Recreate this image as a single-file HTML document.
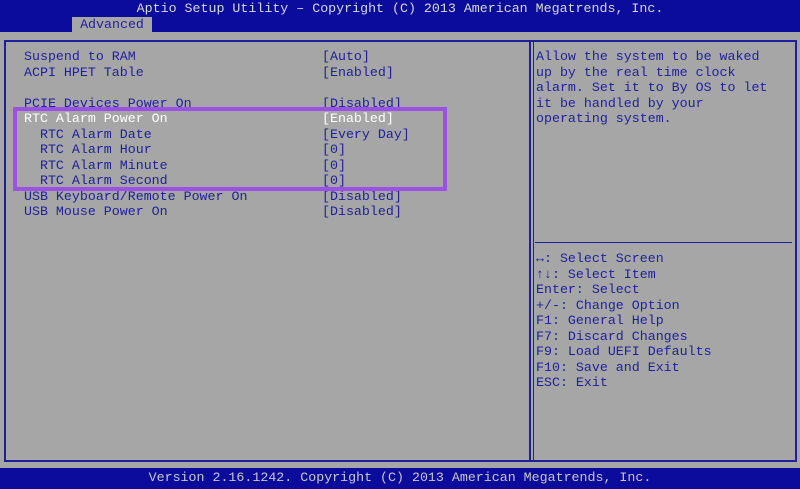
<!DOCTYPE html>
<html><head><style>
body{margin:0;width:800px;height:489px;background:#a6a6a6;position:relative;overflow:hidden;font-family:"Liberation Mono",monospace;font-size:13.3px;color:#1f1f9c}
.abs{position:absolute;white-space:pre;line-height:15.5px}
#top{position:absolute;left:0;top:0;width:800px;height:32px;background:#0c0c9c}
#title{position:absolute;left:0;top:1px;width:800px;text-align:center;color:#d8d8d8;font-size:13.3px;line-height:16px}
#tab{position:absolute;left:72px;top:17px;width:80px;height:15px;background:#a6a6a6;color:#1f1f9c;text-align:center;line-height:15px}
#frame{position:absolute;left:4px;top:40px;width:789px;height:418px;border:2px solid #1f1f9c}
#div{position:absolute;left:529px;top:40px;width:2px;height:422px;background:#1f1f9c}
#div2{position:absolute;left:533px;top:40px;width:1px;height:422px;background:#1f1f9c}
#hl{position:absolute;left:535px;top:242px;width:257px;height:1px;background:#1f1f9c}
#foot{position:absolute;left:0;top:468px;width:800px;height:21px;background:#0c0c9c;color:#c8c8c8;text-align:center;line-height:19px}
#box{position:absolute;left:13px;top:107px;width:426px;height:76px;border:4px solid #9b50e6}
</style></head><body>
<div id="top"><div id="title">Aptio Setup Utility – Copyright (C) 2013 American Megatrends, Inc.</div><div id="tab">Advanced</div></div>
<div id="frame"></div><div id="div"></div><div id="div2"></div><div id="hl"></div>
<div class="abs" style="left:24px;top:49px">Suspend to RAM
ACPI HPET Table

PCIE Devices Power On
<span style="color:#fff">RTC Alarm Power On</span>
  RTC Alarm Date
  RTC Alarm Hour
  RTC Alarm Minute
  RTC Alarm Second
USB Keyboard/Remote Power On
USB Mouse Power On</div>
<div class="abs" style="left:322px;top:49px">[Auto]
[Enabled]

[Disabled]
<span style="color:#fff">[Enabled]</span>
[Every Day]
[0]
[0]
[0]
[Disabled]
[Disabled]</div>
<div class="abs" style="left:536px;top:49px">Allow the system to be waked
up by the real time clock
alarm. Set it to By OS to let
it be handled by your
operating system.</div>
<div class="abs" style="left:536px;top:251px">↔: Select Screen
↑↓: Select Item
Enter: Select
+/-: Change Option
F1: General Help
F7: Discard Changes
F9: Load UEFI Defaults
F10: Save and Exit
ESC: Exit</div>
<div id="box"></div>
<div id="foot">Version 2.16.1242. Copyright (C) 2013 American Megatrends, Inc.</div>
</body></html>
